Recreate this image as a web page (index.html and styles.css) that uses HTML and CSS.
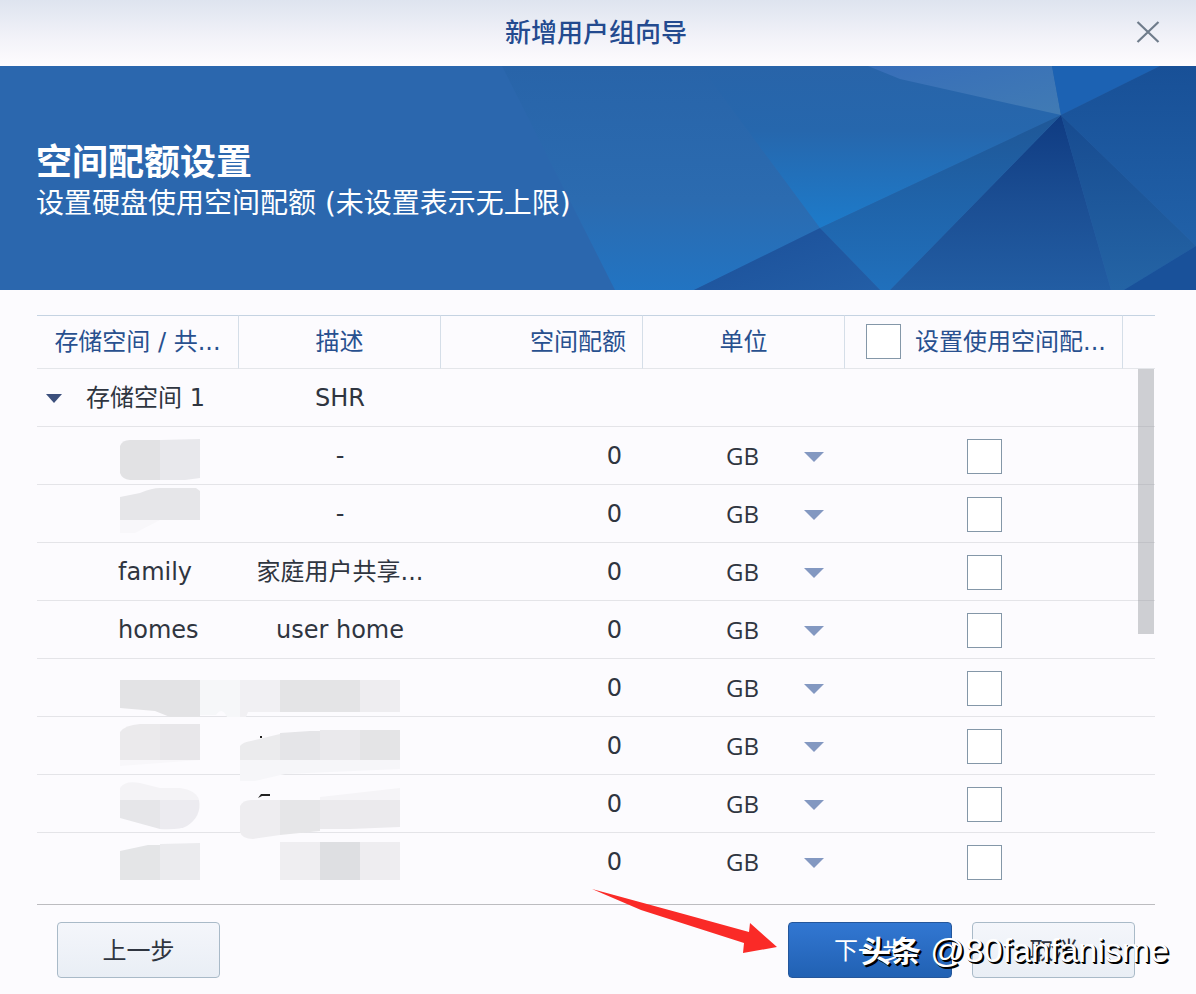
FILE: index.html
```html
<!DOCTYPE html>
<html lang="zh-CN">
<head>
  <meta charset="UTF-8">
  <meta name="viewport" content="width=device-width, initial-scale=1.0">
  <title>新增用户组向导</title>
  <link rel="stylesheet" href="styles.css">
</head>
<body>
  <div class="wizard">
    <!-- 标题栏 -->
    <header class="titlebar">
      <h1>新增用户组向导</h1>
      <button type="button" class="close" aria-label="关闭">
        <svg width="24" height="24" viewBox="0 0 24 24"><path d="M1.500 2L22.500 22M22.500 2L1.500 22" fill="none" stroke="#6f7c8b" stroke-width="2.200"/></svg>
      </button>
    </header>

    <!-- 横幅 -->
    <section class="banner">
      <svg class="facets" width="696" height="224" viewBox="500 66 696 224">
        <defs>
          <linearGradient id="g1" gradientUnits="userSpaceOnUse" x1="0" y1="66" x2="0" y2="290"><stop offset="0" stop-color="#2864a9"/><stop offset=".6" stop-color="#2b6bb0"/><stop offset="1" stop-color="#2274c2"/></linearGradient>
          <linearGradient id="g2" gradientUnits="userSpaceOnUse" x1="0" y1="66" x2="0" y2="228"><stop offset="0" stop-color="#2864a9"/><stop offset=".4" stop-color="#2667ad"/><stop offset="1" stop-color="#1d7bca"/></linearGradient>
          <linearGradient id="g3" x1="0" y1="0" x2="1" y2="1"><stop offset="0" stop-color="#376eb9"/><stop offset="1" stop-color="#417bb4"/></linearGradient>
          <linearGradient id="g4" x1="0" y1="0" x2="0" y2="1"><stop offset="0" stop-color="#185097"/><stop offset="1" stop-color="#2161a8"/></linearGradient>
          <linearGradient id="g5" x1="0" y1="0" x2="0" y2="1"><stop offset="0" stop-color="#0f3b82"/><stop offset=".5" stop-color="#1b4e93"/><stop offset="1" stop-color="#225da3"/></linearGradient>
          <linearGradient id="g6" x1="0" y1="0" x2="0" y2="1"><stop offset="0" stop-color="#1f5797"/><stop offset="1" stop-color="#2070bc"/></linearGradient>
          <linearGradient id="g7" x1="0" y1="0" x2="1" y2="1"><stop offset="0" stop-color="#1b4f99"/><stop offset="1" stop-color="#235ea6"/></linearGradient>
          <linearGradient id="g8" x1="0" y1="0" x2="0" y2="1"><stop offset="0" stop-color="#174b90"/><stop offset="1" stop-color="#2464a5"/></linearGradient>
        </defs>
        <path d="M502 66H1061V115L694 290H615Z" fill="url(#g1)"/>
        <path d="M700 66H868L1061 115L820 228Z" fill="url(#g2)"/>
        <path d="M868 66H1052L1061 115L900 79Z" fill="url(#g3)"/>
        <path d="M1052 66H1160L1061 115Z" fill="#1c62b3"/>
        <path d="M1160 66H1196V246L1061 115Z" fill="url(#g4)"/>
        <path d="M1061 115L1196 246L1124 290H1111Z" fill="url(#g8)"/>
        <path d="M1196 246V290H1124Z" fill="#19519a"/>
        <path d="M1061 115L1111 290H890Z" fill="url(#g5)"/>
        <path d="M1061 115L890 290H880L820 228Z" fill="url(#g6)"/>
        <path d="M820 228L880 290H694Z" fill="url(#g7)"/>
      </svg>
      <h2>空间配额设置</h2>
      <p>设置硬盘使用空间配额 (未设置表示无上限)</p>
    </section>

    <main>
      <div class="grid">
        <table>
          <colgroup>
            <col class="col"><col class="col"><col class="col"><col class="col"><col class="col-set"><col class="col-end">
          </colgroup>
          <thead>
            <tr>
              <th>存储空间 / 共...</th>
              <th>描述</th>
              <th class="num">空间配额</th>
              <th>单位</th>
              <th><label class="check-all"><input type="checkbox"><span>设置使用空间配...</span></label></th>
              <th></th>
            </tr>
          </thead>
          <tbody>
            <tr>
              <td class="volume"><i class="caret"></i>存储空间 1</td>
              <td>SHR</td>
              <td></td>
              <td></td>
              <td></td>
              <td></td>
            </tr>
            <tr>
              <td class="name"></td>
              <td>-</td>
              <td class="num">0</td>
              <td><span class="unit"><select aria-label="单位"><option>GB</option></select></span></td>
              <td><input type="checkbox" aria-label="设置使用空间配额"></td>
              <td></td>
            </tr>
            <tr>
              <td class="name"></td>
              <td>-</td>
              <td class="num">0</td>
              <td><span class="unit"><select aria-label="单位"><option>GB</option></select></span></td>
              <td><input type="checkbox" aria-label="设置使用空间配额"></td>
              <td></td>
            </tr>
            <tr>
              <td class="name">family</td>
              <td>家庭用户共享...</td>
              <td class="num">0</td>
              <td><span class="unit"><select aria-label="单位"><option>GB</option></select></span></td>
              <td><input type="checkbox" aria-label="设置使用空间配额"></td>
              <td></td>
            </tr>
            <tr>
              <td class="name">homes</td>
              <td>user home</td>
              <td class="num">0</td>
              <td><span class="unit"><select aria-label="单位"><option>GB</option></select></span></td>
              <td><input type="checkbox" aria-label="设置使用空间配额"></td>
              <td></td>
            </tr>
            <tr>
              <td class="name"></td>
              <td></td>
              <td class="num">0</td>
              <td><span class="unit"><select aria-label="单位"><option>GB</option></select></span></td>
              <td><input type="checkbox" aria-label="设置使用空间配额"></td>
              <td></td>
            </tr>
            <tr>
              <td class="name"></td>
              <td></td>
              <td class="num">0</td>
              <td><span class="unit"><select aria-label="单位"><option>GB</option></select></span></td>
              <td><input type="checkbox" aria-label="设置使用空间配额"></td>
              <td></td>
            </tr>
            <tr>
              <td class="name"></td>
              <td></td>
              <td class="num">0</td>
              <td><span class="unit"><select aria-label="单位"><option>GB</option></select></span></td>
              <td><input type="checkbox" aria-label="设置使用空间配额"></td>
              <td></td>
            </tr>
            <tr>
              <td class="name"></td>
              <td></td>
              <td class="num">0</td>
              <td><span class="unit"><select aria-label="单位"><option>GB</option></select></span></td>
              <td><input type="checkbox" aria-label="设置使用空间配额"></td>
              <td></td>
            </tr>
          </tbody>
        </table>
        <div class="scrollbar"></div>

        <!-- 马赛克 -->
        <svg class="mosaic" width="282" height="460" viewBox="120 430 282 460">
          <path d="M120 446Q122 440 130 440H160V480H130Q122 479 120 473Z" fill="#e2e2e4"/>
          <path d="M160 440L200 439V478L185 480H160Z" fill="#e8e8ec"/>
          <path d="M120 497L140 493Q152 488 160 488H196L200 491V520H120Z" fill="#e6e6e9"/>
          <path d="M120 520H160L135 533H120Z" fill="#f8f7fa"/>

          <path d="M120 680H200V717H170L155 711L120 708Z" fill="#e3e3e5"/>
          <path d="M200 680H240V717H227Q222 706 216 715H200Z" fill="#f6f7f9"/>
          <path d="M240 680H280V712H248L246 717H240Z" fill="#f1f0f3"/>
          <path d="M280 680H360V712H280Z" fill="#e4e4e6"/>
          <path d="M360 680H400V712H360Z" fill="#eeedf0"/>

          <path d="M120 732Q125 725 140 724H160V760H120Z" fill="#ebeaec"/>
          <path d="M160 724H200V760H160Z" fill="#e8e7ea"/>
          <path d="M120 760H200L120 766Z" fill="#f8f7fa"/>
          <path d="M240 746Q243 742 251 741L280 734V760H240Z" fill="#ebebed"/>
          <path d="M280 733L310 731H320V760H280Z" fill="#e5e5e8"/>
          <path d="M320 730H360V760H320Z" fill="#eae9ec"/>
          <path d="M360 730H400V760H360Z" fill="#e4e4e6"/>
          <path d="M240 760H400V769L285 774L255 781H240Z" fill="#f6f6f9"/>
          <path d="M260 736H262V738H260Z" fill="#222"/>

          <path d="M120 800V788Q125 780 140 783L160 788H180Q196 790 199 800Z" fill="#f4f3f6"/>
          <path d="M120 800H160V829L120 818Z" fill="#e6e6e9"/>
          <path d="M160 800H199Q202 816 187 826Q180 830 160 829Z" fill="#ecebf0"/>
          <path d="M320 797L400 788V800H320Z" fill="#f5f4f7"/>
          <path d="M240 806Q243 800 251 800H280V835L253 839Q242 839 240 832Z" fill="#eeedf0"/>
          <path d="M280 800H320V831L280 835Z" fill="#e6e6e8"/>
          <path d="M320 800H400V827L350 829H320Z" fill="#ebeaed"/>
          <path d="M258 798L261 794H270V796H262Z" fill="#222"/>

          <path d="M120 851L148 845H160V880H120Z" fill="#e4e5e7"/>
          <path d="M160 844L200 843V880H160Z" fill="#ebebee"/>
          <path d="M280 842H320V880H280Z" fill="#efeef1"/>
          <path d="M320 842H360V880H320Z" fill="#dedfe2"/>
          <path d="M360 842H400V880H360Z" fill="#eeedf0"/>
        </svg>
      </div>

      <footer>
        <button type="button">上一步</button>
        <div class="right">
          <button type="button" class="next">下一步</button>
          <button type="button">取消</button>
        </div>
        <svg class="arrow" width="188" height="68" viewBox="590 886 188 68"><path d="M592 888L680 912L749 931L750 922L777 946L743 952L744 942L641 909Z" fill="#fa2a27"/></svg>
      </footer>
    </main>
    <div class="watermark"><b>头条</b> @80fanfanisme</div>
  </div>
</body>
</html>
```
FILE: styles.css
```css
*{margin: 0;padding: 0;box-sizing: border-box;}
body{
  background: #fcfbfe;
  color: #2f3540;
  font: 24px/32px "DejaVu Sans", "Noto Sans CJK SC", sans-serif;
}
.wizard{
  position: relative;
  min-height: 100vh;
}
button, select, input{
  font: inherit;
  color: inherit;
}

/* 标题栏 */
.titlebar{
  display: flex;
  align-items: center;
  justify-content: center;
  position: relative;
  height: 66px;
  padding: 0 4px 4px 0;
  background: linear-gradient(#dee4ef, #f3f3f9 60%, #fefcfe);
}
.titlebar h1{
  font: 500 26px/32px "Noto Sans CJK SC", sans-serif;
  color: #234a8f;
}
.close{
  position: absolute;
  right: 36px;
  top: 20px;
  height: 24px;
  border: none;
  background: none;
}
.close svg{
  display: block;
}

/* 横幅 */
.banner{
  position: relative;
  height: 224px;
  padding: 71px 36px 0;
  background: #2b67ae;
  color: #fff;
}
.banner .facets{
  position: absolute;
  right: 0;
  top: 0;
}
.banner h2, .banner p{
  position: relative;
}
.banner h2{
  margin-bottom: 5px;
  font: 700 36px/44px "Noto Sans CJK SC", sans-serif;
}
.banner p{
  font-size: 28px;
  line-height: 36px;
}

main{
  padding: 25px 41px 16px 37px;
}

/* 表格 */
.grid{
  position: relative;
}
table{
  width: 100%;
  table-layout: fixed;
  border-collapse: separate;
  border-spacing: 0;
}
.col{
  width: 202px;
}
.col-set{
  width: 278px;
}
.col-end{
  width: 32px;
}
th{
  height: 54px;
  border-top: 1px solid #c5d3e2;
  border-bottom: 1px solid #e4e6ea;
  border-right: 1px solid #d5dee8;
  font-weight: 400;
  color: #28508f;
  white-space: nowrap;
}
th:last-child{
  border-right: none;
}
th.num{
  text-align: right;
  padding-right: 16px;
}
td{
  height: 58px;
  border-bottom: 1px solid #e4e4e8;
  text-align: center;
  white-space: nowrap;
}
tr:last-child td{
  border-bottom-color: transparent;
}
td.num{
  text-align: right;
  padding-right: 21px;
}
td.volume{
  text-align: left;
  padding-left: 9px;
}
td.name{
  text-align: left;
  padding-left: 81px;
}
.caret{
  display: inline-block;
  margin-right: 24px;
  vertical-align: middle;
  border: 8px solid transparent;
  border-top: 9px solid #3c4f7c;
  border-bottom: none;
}
.unit{
  display: flex;
  align-items: center;
  padding: 0 21px 0 83px;
}
.unit::after{
  content: "";
  margin-top: 2px;
  border: 10px solid transparent;
  border-top: 10px solid #8398c1;
  border-bottom: none;
}
.unit select{
  flex: 1;
  min-width: 0;
  height: 32px;
  padding-bottom: 4px;
  appearance: none;
  border: none;
  background: none;
  font-family: "Open Sans", sans-serif;
}
input[type="checkbox"]{
  display: block;
  flex: none;
  width: 35px;
  height: 35px;
  margin: 2px auto 0;
  appearance: none;
  border: 1px solid #8497a8;
  background: #fff;
}
.check-all{
  display: flex;
  align-items: center;
  gap: 14px;
  padding-left: 21px;
}
.check-all input[type="checkbox"]{
  margin: 0 0 2px;
}
.scrollbar{
  position: absolute;
  right: 1px;
  top: 54px;
  width: 16px;
  height: 265px;
  background: rgba(150, 153, 160, 0.45);
}
.mosaic{
  position: absolute;
  left: 83px;
  top: 115px;
}

/* 底部按钮 */
footer{
  position: relative;
  display: flex;
  justify-content: space-between;
  margin-top: 13px;
  padding: 17px 20px 0;
  border-top: 1px solid #bcbcc0;
}
.right{
  display: flex;
  gap: 20px;
}
footer button{
  width: 163px;
  height: 56px;
  padding-top: 2px;
  border: 1px solid #a9bac8;
  border-radius: 4px;
  background: linear-gradient(#f4f6fb, #e9eef5);
}
footer .next{
  width: 164px;
  border-color: #24569b;
  background: linear-gradient(#3277d2, #2161b3);
  color: #fff;
}
.arrow{
  position: absolute;
  right: 377px;
  top: -18px;
}

.watermark{
  position: absolute;
  right: 27px;
  top: 930px;
  color: #fff;
  font: 34px/40px "Liberation Sans", "Noto Sans CJK SC", sans-serif;
  text-shadow: 1px 1px 0 #000, 2px 2px 0 #000;
  white-space: nowrap;
}
.watermark b{
  font-size: 30px;
}
```
